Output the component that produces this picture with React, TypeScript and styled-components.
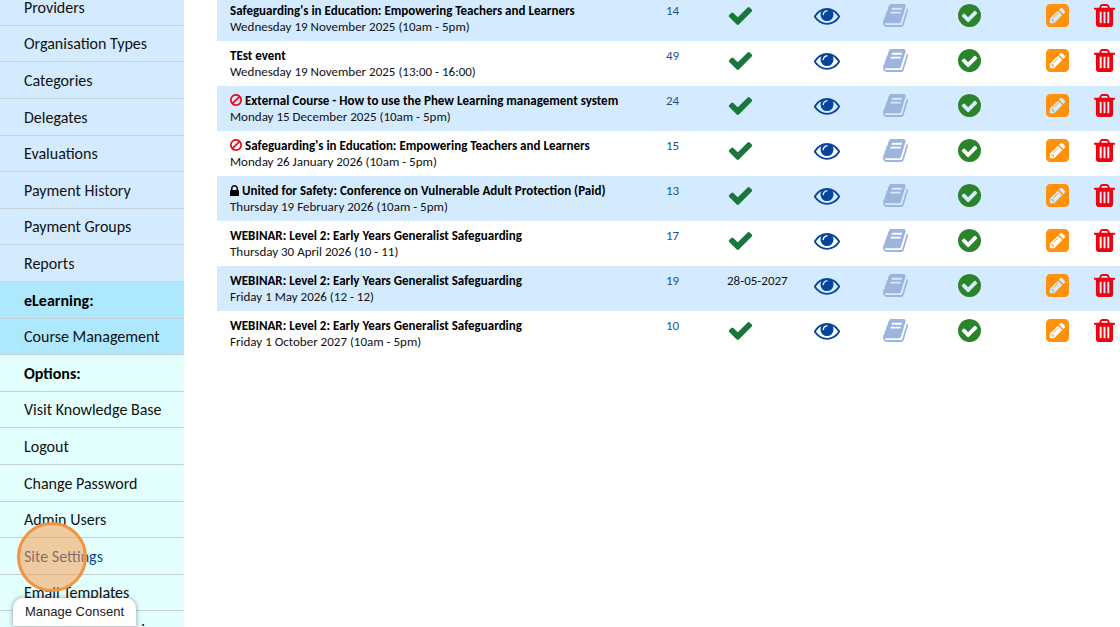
import React from "react";
import styled, { createGlobalStyle } from "styled-components";

const GlobalStyle = createGlobalStyle`
  * { box-sizing: border-box; }
  body {
    margin: 0;
    background: #fff;
    color: #111;
    font-family: Calibri, Carlito, Lato, "Liberation Sans", sans-serif;
  }
`;

const Page = styled.div`
  display: flex;
  height: 100vh;
  overflow: hidden;
  position: relative;
`;

const Sidebar = styled.nav`
  flex: 0 0 184px;
  margin-top: -11px;
`;

const tones = { events: "#d4ebff", learning: "#aee8ff", options: "#e3fffd" };
type Tone = keyof typeof tones;

const Menu = styled.ul`
  list-style: none;
  margin: 0;
  padding: 0;
`;

const MenuItem = styled.li<{ $tone: Tone }>`
  display: flex;
  align-items: center;
  height: 37px;
  padding: 1px 0 0 24px;
  border-bottom: 1px solid #c6d2d8;
  background: ${(p) => tones[p.$tone]};
  font-size: 16px;
  line-height: 20px;
  white-space: nowrap;
  &:nth-child(5n),
  &:nth-child(5n + 2) { height: 36px; }
`;

const MenuLink = styled.a<{ $active?: boolean }>`
  color: ${(p) => (p.$active ? "#0f4a8f" : "#111")};
  text-decoration: none;
`;

const MenuHeading = styled.strong`
  color: #000;
  font-weight: 700;
`;

const Main = styled.main`
  flex: 1;
  min-width: 0;
  margin: -4px 0 0 33px;
`;

const Table = styled.table`
  width: 100%;
  table-layout: fixed;
  border-collapse: collapse;
`;

const Row = styled.tr`
  height: 45px;
  &:nth-child(odd) { background: #d4ebff; }
`;

const Cell = styled.td<{ $icon?: boolean }>`
  height: 45px;
  padding: ${(p) => (p.$icon ? 6 : 7)}px 0 0 13px;
  vertical-align: top;
  font-size: 13px;
  line-height: 16px;
  white-space: nowrap;
`;

const Title = styled.div`
  display: flex;
  align-items: center;
  gap: 3px;
  color: #000;
  font-weight: 700;
  svg { margin-bottom: 2px; }
`;

const CountLink = styled.a`
  color: #1c5293;
  text-decoration: none;
`;

const IconButton = styled.button<{ $color: string }>`
  display: block;
  padding: 0;
  border: 0;
  background: none;
  color: ${(p) => p.$color};
  cursor: pointer;
`;

const Glyph = styled.svg`
  display: block;
  flex: none;
  fill: currentColor;
`;

const ClickMarker = styled.div`
  position: absolute;
  left: 17px;
  top: 522px;
  width: 70px;
  height: 70px;
  border: 3px solid #f4923f;
  border-radius: 50%;
  background: rgba(247, 149, 68, 0.5);
  pointer-events: none;
`;

const ConsentButton = styled.button`
  position: absolute;
  left: 13px;
  bottom: 0;
  height: 29px;
  padding: 0 12px;
  border: 0;
  border-bottom: 1px solid #c4c8c8;
  border-radius: 10px 10px 0 0;
  background: #fff;
  box-shadow: 0 0 5px rgba(0, 0, 0, 0.4);
  color: #222;
  font: 13px/20px "Liberation Sans", Arial, sans-serif;
`;

const icons = {
  check: {
    box: "0 0 1792 1792", w: 27, h: 27,
    d: "M1671 566q0 40-28 68l-724 724-136 136q-28 28-68 28t-68-28l-136-136-362-362q-28-28-28-68t28-68l136-136q28-28 68-28t68 28l294 295 656-657q28-28 68-28t68 28l136 136q28 28 28 68z",
  },
  eye: {
    box: "0 0 1792 1792", w: 26, h: 27,
    d: "M1664 960q-152-236-381-353 61 104 61 225 0 185-131.5 316.5t-316.5 131.5-316.5-131.5-131.5-316.5q0-121 61-225-229 117-381 353 133 205 333.5 326.5t434.5 121.5 434.5-121.5 333.5-326.5zm-720-384q0-20-14-34t-34-14q-125 0-214.5 89.5t-89.5 214.5q0 20 14 34t34 14 34-14 14-34q0-86 61-147t147-61q20 0 34-14t14-34zm848 384q0 34-20 69-140 230-376.5 368.5t-499.5 138.5-499.5-139-376.5-368q-20-35-20-69t20-69q140-229 376.5-368t499.5-139 499.5 139 376.5 368q20 35 20 69z",
  },
  book: {
    box: "64 0 1664 1792", w: 25, h: 27,
    d: "M1703 478q40 57 18 129l-275 906q-19 64-76.5 107.5t-122.5 43.5h-923q-77 0-148.5-53.5t-99.5-131.5q-24-67-2-127 0-4 3-27t4-37q1-8-3-21.5t-3-19.5q2-11 8-21t16.5-23.5 16.5-23.5q23-38 45-91.5t30-91.5q3-10 .5-30t-.5-28q3-11 17-28t17-23q21-36 42-92t25-90q1-9-2.5-32t.5-28q4-13 22-30.5t22-22.5q19-26 42.5-84.5t27.5-96.5q1-8-3-25.5t-2-26.5q2-8 9-18t18-23 17-21q8-12 16.5-30.5t15-35 16-36 19.5-32 26.5-23.5 36-11.5 47.5 5.5l-1 3q38-9 51-9h761q74 0 114 56t18 130l-274 906q-36 119-71.5 153.5t-128.5 34.5h-869q-27 0-38 15-11 16-1 43 24 70 144 70h923q29 0 56-15.5t35-41.5l300-987q7-22 5-57 38 15 59 43zm-1064 2q-4 13 2 22.5t20 9.5h608q13 0 25.5-9.5t16.5-22.5l21-64q4-13-2-22.5t-20-9.5h-608q-13 0-25.5 9.5t-16.5 22.5zm-83 256q-4 13 2 22.5t20 9.5h608q13 0 25.5-9.5t16.5-22.5l21-64q4-13-2-22.5t-20-9.5h-608q-13 0-25.5 9.5t-16.5 22.5z",
  },
  checkCircle: {
    box: "128 0 1536 1792", w: 23, h: 27,
    d: "M1412 734q0-28-18-46l-91-90q-19-19-45-19t-45 19l-408 407-226-226q-19-19-45-19t-45 19l-91 90q-18 18-18 46 0 27 18 45l362 362q19 19 45 19 27 0 46-19l543-543q18-18 18-45zm252 162q0 209-103 385.5t-279.5 279.5-385.5 103-385.5-103-279.5-279.5-103-385.5 103-385.5 279.5-279.5 385.5-103 385.5 103 279.5 279.5 103 385.5z",
  },
  pencil: {
    box: "0 0 1536 1792", w: 23, h: 27,
    d: "M404 1108l152 152-52 52h-56v-96h-96v-56zm414-390q14 13-3 30l-291 291q-17 17-30 3-14-13 3-30l291-291q17-17 30-3zm-274 690l544-544-288-288-544 544v288h288zm608-608l92-92q28-28 28-68t-28-68l-152-152q-28-28-68-28t-68 28l-92 92zm384-384v960q0 119-84.5 203.5t-203.5 84.5h-960q-119 0-203.5-84.5t-84.5-203.5v-960q0-119 84.5-203.5t203.5-84.5h960q119 0 203.5 84.5t84.5 203.5z",
  },
  trash: {
    box: "192 0 1408 1792", w: 21, h: 27,
    d: "M704 1376v-704q0-14-9-23t-23-9h-64q-14 0-23 9t-9 23v704q0 14 9 23t23 9h64q14 0 23-9t9-23zm256 0v-704q0-14-9-23t-23-9h-64q-14 0-23 9t-9 23v704q0 14 9 23t23 9h64q14 0 23-9t9-23zm256 0v-704q0-14-9-23t-23-9h-64q-14 0-23 9t-9 23v704q0 14 9 23t23 9h64q14 0 23-9t9-23zm-544-992h448l-48-117q-7-9-17-11h-317q-10 2-17 11zm928 32v64q0 14-9 23t-23 9h-96v948q0 83-47 143.5t-113 60.5h-832q-66 0-113-58.5t-47-141.5v-952h-96q-14 0-23-9t-9-23v-64q0-14 9-23t23-9h309l70-167q15-37 54-63t79-26h320q40 0 79 26t54 63l70 167h309q14 0 23 9t9 23z",
  },
  ban: {
    box: "128 128 1536 1536", w: 12, h: 12,
    d: "M1440 893q0-161-87-295l-754 753q137 89 297 89 111 0 211.5-43.5t173.5-116.5 116-174.5 43-212.5zm-999 299l755-754q-135-91-300-91-148 0-273 73t-198 199-73 274q0 162 89 299zm1223-299q0 157-61 300t-163.5 246-245 164-298.5 61-298.5-61-245-164-163.5-246-61-300 61-299.5 163.5-245.5 245-164 298.5-61 298.5 61 245 164 163.5 245.5 61 299.5z",
  },
  lock: {
    box: "320 128 1152 1408", w: 9, h: 11,
    d: "M640 768h512v-192q0-106-75-181t-181-75-181 75-75 181v192zm832 96v576q0 40-28 68t-68 28h-960q-40 0-68-28t-28-68v-576q0-40 28-68t68-28h32v-192q0-184 132-316t316-132 316 132 132 316v192h32q40 0 68 28t28 68z",
  },
};

const Icon = ({ name, color }: { name: keyof typeof icons; color?: string }) => {
  const i = icons[name];
  return (
    <Glyph viewBox={i.box} width={i.w} height={i.h} color={color} aria-hidden="true">
      <path d={i.d} />
    </Glyph>
  );
};

const menu: { label: string; tone: Tone; heading?: boolean; active?: boolean }[] = [
  { label: "Providers", tone: "events" },
  { label: "Organisation Types", tone: "events" },
  { label: "Categories", tone: "events" },
  { label: "Delegates", tone: "events" },
  { label: "Evaluations", tone: "events" },
  { label: "Payment History", tone: "events" },
  { label: "Payment Groups", tone: "events" },
  { label: "Reports", tone: "events" },
  { label: "eLearning:", tone: "learning", heading: true },
  { label: "Course Management", tone: "learning" },
  { label: "Options:", tone: "options", heading: true },
  { label: "Visit Knowledge Base", tone: "options" },
  { label: "Logout", tone: "options" },
  { label: "Change Password", tone: "options" },
  { label: "Admin Users", tone: "options" },
  { label: "Site Settings", tone: "options", active: true },
  { label: "Email Templates", tone: "options" },
  { label: "Customer Categories", tone: "options" },
];

const events: { title: string; date: string; count: number; mark?: "ban" | "lock"; expires?: string }[] = [
  { title: "Safeguarding's in Education: Empowering Teachers and Learners", date: "Wednesday 19 November 2025 (10am - 5pm)", count: 14 },
  { title: "TEst event", date: "Wednesday 19 November 2025 (13:00 - 16:00)", count: 49 },
  { title: "External Course - How to use the Phew Learning management system", date: "Monday 15 December 2025 (10am - 5pm)", count: 24, mark: "ban" },
  { title: "Safeguarding's in Education: Empowering Teachers and Learners", date: "Monday 26 January 2026 (10am - 5pm)", count: 15, mark: "ban" },
  { title: "United for Safety: Conference on Vulnerable Adult Protection (Paid)", date: "Thursday 19 February 2026 (10am - 5pm)", count: 13, mark: "lock" },
  { title: "WEBINAR: Level 2: Early Years Generalist Safeguarding", date: "Thursday 30 April 2026 (10 - 11)", count: 17 },
  { title: "WEBINAR: Level 2: Early Years Generalist Safeguarding", date: "Friday 1 May 2026 (12 - 12)", count: 19, expires: "28-05-2027" },
  { title: "WEBINAR: Level 2: Early Years Generalist Safeguarding", date: "Friday 1 October 2027 (10am - 5pm)", count: 10 },
];

const actions: { icon: keyof typeof icons; color: string; label: string }[] = [
  { icon: "eye", color: "#07459b", label: "View" },
  { icon: "book", color: "#9db4dc", label: "Register" },
  { icon: "checkCircle", color: "#2b842b", label: "Approve" },
  { icon: "pencil", color: "#ff920a", label: "Edit" },
  { icon: "trash", color: "#ee0410", label: "Delete" },
];

export default function App() {
  return (
    <Page>
      <GlobalStyle />
      <Sidebar>
        <Menu>
          {menu.map((m) => (
            <MenuItem key={m.label} $tone={m.tone}>
              {m.heading ? <MenuHeading>{m.label}</MenuHeading> : <MenuLink href="#" $active={m.active}>{m.label}</MenuLink>}
            </MenuItem>
          ))}
        </Menu>
      </Sidebar>
      <Main>
        <Table>
          <colgroup>
            <col />
            <col width="61" />
            <col width="87" />
            <col width="69" />
            <col width="75" />
            <col width="88" />
            <col width="48" />
            <col width="39" />
          </colgroup>
          <tbody>
            {events.map((e, n) => (
              <Row key={n}>
                <Cell>
                  <Title>
                    {e.mark && <Icon name={e.mark} color={e.mark === "ban" ? "#e3101c" : "#000"} />}
                    {e.title}
                  </Title>
                  {e.date}
                </Cell>
                <Cell><CountLink href="#">{e.count}</CountLink></Cell>
                <Cell $icon={!e.expires}>{e.expires ?? <Icon name="check" color="#1a773c" />}</Cell>
                {actions.map((a) => (
                  <Cell key={a.icon} $icon>
                    <IconButton type="button" aria-label={a.label} $color={a.color}>
                      <Icon name={a.icon} />
                    </IconButton>
                  </Cell>
                ))}
              </Row>
            ))}
          </tbody>
        </Table>
      </Main>
      <ClickMarker />
      <ConsentButton type="button">Manage Consent</ConsentButton>
    </Page>
  );
}
